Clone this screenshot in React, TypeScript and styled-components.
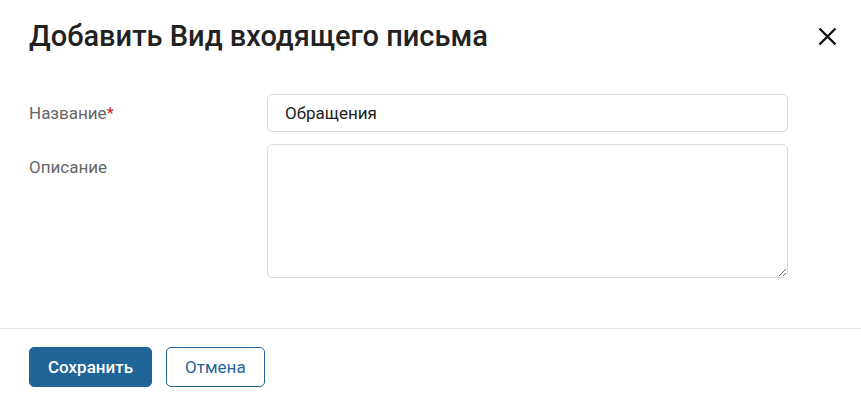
import React from "react";
import styled, { createGlobalStyle } from "styled-components";

const Global = createGlobalStyle`
  html, body { margin: 0; padding: 0; background: #fff; }
  body { font-family: Roboto, "Noto Sans", Arial, sans-serif; }
  * { box-sizing: border-box; }
`;

const Dialog = styled.div`
  width: 861px;
  height: 404px;
  display: flex;
  flex-direction: column;
  background: #fff;
`;

const Header = styled.div`
  display: flex;
  align-items: center;
  justify-content: space-between;
  padding: 14px 24px 0 29px;
  height: 58px;
`;

const Title = styled.h1`
  margin: 0;
  font-size: 29px;
  line-height: 34px;
  font-weight: 500;
  color: #222;
`;

const Close = styled.button`
  border: 0;
  background: none;
  padding: 0;
  width: 19px;
  height: 19px;
  display: flex;
  align-items: center;
  justify-content: center;
  cursor: pointer;
`;

const Body = styled.div`
  flex: 1;
  padding: 36px 73px 0 29px;
  display: flex;
  flex-direction: column;
  gap: 12px;
`;

const Row = styled.div`
  display: grid;
  grid-template-columns: 238px 1fr;
  align-items: start;
`;

const Label = styled.label<{ $offset?: number }>`
  font-size: 17px;
  line-height: 20px;
  color: #666;
  padding-top: ${(p) => p.$offset ?? 9}px;
`;

const Req = styled.span`
  color: #d62a2a;
`;

const Input = styled.input`
  height: 38px;
  width: 100%;
  border: 1px solid #d9d9d9;
  border-radius: 5px;
  padding: 0 17px;
  font-family: inherit;
  font-size: 17px;
  color: #222;
  outline: none;
`;

const TextArea = styled.textarea`
  height: 134px;
  width: 100%;
  border: 1px solid #d9d9d9;
  border-radius: 5px;
  padding: 8px 17px;
  font-family: inherit;
  font-size: 17px;
  resize: vertical;
  outline: none;
  display: block;
`;

const Footer = styled.div`
  border-top: 1px solid #e6e6e6;
  padding: 18px 29px 17px;
  display: flex;
  gap: 14px;
`;

const Button = styled.button<{ $primary?: boolean }>`
  height: 40px;
  padding: 0 18px;
  border-radius: 5px;
  font-family: inherit;
  font-size: 17px;
  font-weight: ${(p) => (p.$primary ? 500 : 400)};
  cursor: pointer;
  border: 1px solid #1f6598;
  background: ${(p) => (p.$primary ? "#1f6598" : "#fff")};
  color: ${(p) => (p.$primary ? "#fff" : "#1f6598")};
`;

export default function App() {
  return (
    <>
      <Global />
      <Dialog>
        <Header>
          <Title>Добавить Вид входящего письма</Title>
          <Close aria-label="close">
            <svg width="19" height="19" viewBox="0 0 19 19">
              <path d="M1.5 1.5L17.5 17.5M17.5 1.5L1.5 17.5" stroke="#111" strokeWidth="2.4" />
            </svg>
          </Close>
        </Header>
        <Body>
          <Row>
            <Label>
              Название<Req>*</Req>
            </Label>
            <Input defaultValue="Обращения" />
          </Row>
          <Row>
            <Label $offset={13}>Описание</Label>
            <TextArea />
          </Row>
        </Body>
        <Footer>
          <Button $primary>Сохранить</Button>
          <Button>Отмена</Button>
        </Footer>
      </Dialog>
    </>
  );
}
